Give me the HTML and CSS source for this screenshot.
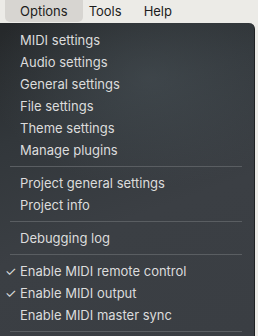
FILE: index.html
```html
<!DOCTYPE html>
<html>
<head>
    <title>Options menu</title>
    <link rel="stylesheet" href="styles.css">
</head>
<body>
    <div class="menubar">
        <span class="menubar-item active">Options</span>
        <span class="menubar-item">Tools</span>
        <span class="menubar-item">Help</span>
    </div>

    <div class="menu">
        <div class="menu-item">MIDI settings</div>
        <div class="menu-item">Audio settings</div>
        <div class="menu-item">General settings</div>
        <div class="menu-item">File settings</div>
        <div class="menu-item">Theme settings</div>
        <div class="menu-item">Manage plugins</div>
        <div class="separator"></div>
        <div class="menu-item">Project general settings</div>
        <div class="menu-item">Project info</div>
        <div class="separator"></div>
        <div class="menu-item">Debugging log</div>
        <div class="separator"></div>
        <div class="menu-item checked">Enable MIDI remote control</div>
        <div class="menu-item checked">Enable MIDI output</div>
        <div class="menu-item">Enable MIDI master sync</div>
        <div class="separator"></div>
    </div>
</body>
</html>
```

FILE: styles.css
```css
body {
    margin: 0;
    width: 258px;
    height: 336px;
    overflow: hidden;
    background-color: #ecebe7;
    font-family: Inter, "Noto Sans", sans-serif;
    font-size: 13px;
}

.menubar {
    display: flex;
    height: 23px;
    padding-left: 5px;
    background-color: #ecebe7;
}

.menubar-item {
    display: flex;
    align-items: center;
    height: 22px;
    padding: 0 11px;
    color: #1c1c1c;
    font-size: 13px;
}

.menubar-item.active {
    padding: 0 15px;
    margin-right: -5px;
    background-color: #d7d5d1;
    border-radius: 0 0 5px 5px;
}

.menu {
    width: 255px;
    height: 313px;
    padding-top: 6px;
    box-sizing: border-box;
    background:
        radial-gradient(ellipse 160px 110px at 150px 55px, rgba(78, 88, 94, 0.45), rgba(78, 88, 94, 0)),
        linear-gradient(160deg, #25282a 0%, #32373b 30%, #3b3f44 60%, #3a3e43 100%);
    border-right: 1px solid #1e2022;
    border-radius: 0 6px 0 0;
    color: #dcdcdc;
}

.menu-item {
    position: relative;
    height: 22px;
    line-height: 22px;
    padding-left: 20px;
    white-space: nowrap;
}

.menu-item.checked::before {
    content: "\2713";
    position: absolute;
    left: 5px;
    font-size: 13px;
}

.separator {
    height: 1px;
    margin: 5px 12px 5px 10px;
    background-color: #5a5e62;
}
```
